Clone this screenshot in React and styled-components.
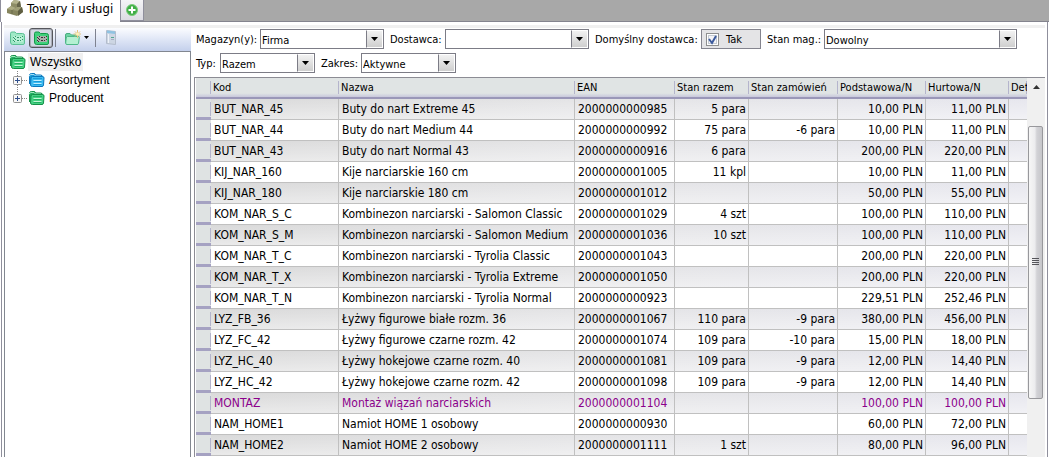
import React from "react";
import styled, { createGlobalStyle, css } from "styled-components";

const GlobalStyle = createGlobalStyle`
  *, *::before, *::after { box-sizing: border-box; }
  body { margin: 0; background: #fff; color: #000; font-family: "DejaVu Sans Condensed", "DejaVu Sans", sans-serif; font-size: 11px; }
  #root { height: 100vh; }
  button, select, input { font: inherit; color: inherit; margin: 0; }
`;

const Window = styled.div`
  display: flex;
  flex-direction: column;
  height: 100vh;
  overflow: hidden;
`;

const TabBar = styled.nav`
  display: flex;
  flex: none;
  height: 22px;
  background: #a8a8a8;
  border-bottom: 1px solid #84848e;
`;

const Tab = styled.button`
  display: flex;
  align-items: center;
  gap: 4px;
  width: 120px;
  height: 22px;
  padding: 0 0 6px 6px;
  border: 0;
  border-left: 1px solid #8f8f9c;
  background: #fff;
  font-size: 13px;
  white-space: nowrap;
`;

const AddTab = styled.button`
  display: flex;
  align-items: center;
  justify-content: center;
  width: 24px;
  height: 21px;
  padding: 0;
  border: 1px solid #8f8f9c;
  border-top: 0;
  background: linear-gradient(#f4f4f6, #dcdce2);
`;

const Body = styled.div`
  display: flex;
  flex: 1;
  min-height: 0;
  margin: 0 1px;
  padding: 3px 2px 0;
  border: 1px solid #8f8f9c;
  border-width: 0 1px;
`;

const Sidebar = styled.aside`
  display: flex;
  flex-direction: column;
  flex: none;
  width: 187px;
  border-top: 3px solid #f0f0f0;
`;

const Toolbar = styled.div`
  display: flex;
  align-items: center;
  height: 23px;
  padding: 0 0 4px 1px;
  background: linear-gradient(#fbfcff, #dfe6f6 50%, #c4d0ec);
`;

const ToolButton = styled.button`
  display: flex;
  align-items: center;
  justify-content: center;
  gap: 3px;
  flex: none;
  width: ${(p) => p.$width || 24}px;
  height: 20px;
  padding: 0;
  border: 1px solid transparent;
  border-radius: 3px;
  background: none;
  ${(p) =>
    p.$pressed &&
    css`
      border-color: #55565c;
      background: #d3d8e4;
      box-shadow: inset 0 0 0 1px #a9adb8;
    `}
`;

const Divider = styled.span`
  flex: none;
  width: 1px;
  height: 18px;
  margin: 0 3px 0 2px;
  background: #7e8290;
`;

const Tree = styled.ul`
  flex: 1;
  margin: 0;
  padding: 1px 0 0 4px;
  border: 1px solid #828790;
  border-bottom: 0;
  list-style: none;
  font-family: "Liberation Sans", sans-serif;
  font-size: 12px;
`;

const Branch = styled.ul`
  margin: 0;
  padding: 0;
  list-style: none;
`;

const TreeRow = styled.div`
  display: flex;
  align-items: center;
  height: 18px;
  gap: 2px;
`;

const TreeText = styled.span`
  padding: 0 2px;
  line-height: 18px;
  background: ${(p) => (p.$selected ? "#f0f0f0" : "none")};
`;

const Expander = styled.button`
  display: flex;
  padding: 0;
  border: 0;
  background: none;
  margin-right: -2px;
`;

const Content = styled.main`
  display: flex;
  flex-direction: column;
  flex: 1;
  min-width: 0;
  border-top: 3px solid #f0f0f0;
`;

const Filters = styled.form`
  display: flex;
  flex-wrap: wrap;
  gap: 4px 6px;
  padding: 1px 5px 4px;
`;

const Field = styled.div`
  display: flex;
  align-items: center;
  height: 20px;
`;

const FieldLabel = styled.label`
  width: ${(p) => p.$width}px;
  white-space: nowrap;
`;

const Combo = styled.div`
  display: grid;
  width: ${(p) => p.$width}px;
  height: 20px;
  border: 1px solid #7c7c86;
  background: #fff;
  & > * { grid-area: 1 / 1; }
`;

const ComboSelect = styled.select`
  appearance: none;
  width: 100%;
  height: 18px;
  padding: 2px 18px 0 1px;
  border: 0;
  border-radius: 0;
  background: none;
`;

const ComboArrow = styled.span`
  display: flex;
  align-items: center;
  justify-content: center;
  justify-self: end;
  width: 17px;
  height: 18px;
  border: 1px solid #fff;
  border-left-color: #7c7c86;
  background: linear-gradient(#f2f2f2, #cfcfcf);
  pointer-events: none;
`;

const CheckBox = styled.label`
  display: flex;
  align-items: center;
  gap: 7px;
  width: 60px;
  height: 20px;
  padding-left: 4px;
  border: 1px solid #84848e;
  background: #e4e4e6;
`;

const CheckInput = styled.span`
  display: grid;
  & > * { grid-area: 1 / 1; }
  & > input {
    appearance: none;
    width: 13px;
    height: 13px;
    border: 1px solid #8e8f8f;
    background: #f4f4f6;
    box-shadow: inset 0 0 0 1px #fff, inset 0 0 0 2px #c4cad2;
  }
  & > svg { pointer-events: none; }
`;

const GridPanel = styled.section`
  display: flex;
  flex: 1;
  min-height: 0;
  margin-left: 3px;
  border-top: 1px solid #8c8c94;
  border-left: 1px solid #8c8c94;
`;

const GridView = styled.div`
  flex: 1;
  min-width: 0;
  overflow: hidden;
  padding-left: 1px;
`;

const Table = styled.table`
  width: 100%;
  table-layout: fixed;
  border-collapse: separate;
  border-spacing: 0;
  font-size: 12px;
`;

const HeadCell = styled.th`
  height: 21px;
  padding: 0 0 0 2px;
  border-bottom: 2px solid #9a97b8;
  background:
    linear-gradient(#b4b4cc, #b4b4cc) right 3px / 1px 13px no-repeat,
    linear-gradient(#e0e4e4 80%, #c8c8dc);
  font-size: 11px;
  font-weight: normal;
  text-align: left;
  white-space: nowrap;
  overflow: hidden;
`;

const Row = styled.tr`
  color: ${(p) => (p.$accent ? "#8b008b" : "#000")};
  background: #fff;
  &:nth-child(odd) {
    background:
      linear-gradient(rgba(255, 255, 255, 0), rgba(255, 255, 255, 0.45)),
      linear-gradient(to right, #d9d9d9, #e4e4e6 45%, #e7e7ee);
  }
`;

const Cell = styled.td`
  height: 21px;
  padding: 0 2px 0 3px;
  border-right: 1px solid #c0c0c0;
  border-bottom: 1px solid #c0c0c0;
  line-height: 20px;
  text-align: ${(p) => (p.$numeric ? "right" : "left")};
  white-space: nowrap;
  overflow: hidden;
  &:last-child { border-right: 0; }
`;

const Selector = styled.td`
  padding: 0;
  border-bottom: 3px solid #a5a2c2;
  background:
    linear-gradient(#b4b4cc, #b4b4cc) right 3px / 1px 14px no-repeat,
    #dfe3e3;
`;

const ScrollBar = styled.div`
  display: flex;
  flex-direction: column;
  flex: none;
  width: 18px;
  padding-left: 1px;
  background: #f0f0f0;
`;

const ScrollUp = styled.button`
  display: flex;
  align-items: center;
  justify-content: center;
  width: 16px;
  height: 18px;
  margin-bottom: 30px;
  padding: 0;
  border: 0;
  background: none;
`;

const Thumb = styled.div`
  display: flex;
  align-items: center;
  justify-content: center;
  width: 15px;
  height: 72%;
  border: 1px solid #98989c;
  border-radius: 2px;
  background: linear-gradient(to right, #f6f6f6, #ececee 45%, #d2d2d6 60%, #c6c6ca);
`;

function FolderIcon({ blue }) {
  const dark = blue ? "#0a78bd" : "#149048";
  const mid = blue ? "#3cbcf2" : "#45d283";
  const deep = blue ? "#1a9ad8" : "#22b062";
  const light = blue ? "#c4f0ff" : "#c0f8d6";
  return (
    <svg width="17" height="16" viewBox="0 0 17 16" aria-hidden="true">
      <path d="M1.5 12V3.500q0-2 2-2h2.500q1 0 1.500 1l.5.5h4.500q2 0 2 2" fill={deep} stroke={dark} />
      <path d="M1 4.500q.5-2 2-2h3l1.500 1.500h5.500" fill="none" stroke={light} opacity=".8" />
      <path d="M4.500 4.500h10q1.500 0 1.500 1.500l-.5 7q-.2 1.500-1.500 1.500H4.500q-1.800 0-2-1.500L3 6q0-1.500 1.500-1.500z" fill={mid} stroke={dark} />
      <path d="M5 6.500h9" stroke={deep} />
      <path d="M5.500 8.500h8M5.500 11.500h8" stroke={light} />
      <path d="M5.500 9.500h8M5.500 12.500h8" stroke={deep} />
    </svg>
  );
}

function ListFolderIcon({ active }) {
  const ink = active ? "#333" : "#2f9468";
  return (
    <svg width="17" height="16" viewBox="0 0 17 16" aria-hidden="true">
      <path d="M1.500 12V3.500q0-1.500 1.500-1.500h3l1.500 1.500h6q2 0 2 2V13q0 1.500-1.500 1.500H3.500q-2 0-2-2.500z" fill={active ? "#3fd07c" : "#9fe8c6"} stroke={active ? "#149a4a" : "#5cc095"} />
      <path d="M4 6h10v6H4z" fill={active ? "#a9b0ac" : "#b8f0d6"} />
      <path d="M4 7.500h1M6 6.500h1M8 7.500h2M11 7.500h1M13 6.500h1M5 8.500h1M4 10.500h1M6 9.500h1M8 10.500h2M11 10.500h1M13 9.500h1M5 11.500h1" stroke={ink} />
    </svg>
  );
}

function NewFolderIcon() {
  return (
    <svg width="17" height="16" viewBox="0 0 17 16" aria-hidden="true">
      <path d="M1.500 13V5q0-1.500 1.500-1.500h3l1.500 1.500h5q1.500 0 1.500 1.500" fill="#6fd4a4" stroke="#48ad7f" />
      <path d="M3.500 6.500h11q1 0 .8 1l-.8 6q-.2 1-1.500 1H3q-1.500 0-1.300-1.500l.5-5q.1-1.500 1.300-1.500z" fill="#b4f0d2" stroke="#4db887" />
      <path d="M13.500 0v8M9.500 4h7.500M11 1.500l5 5M16 1.500l-5 5" stroke="#e6c67e" />
      <circle cx="13.500" cy="4" r="1.500" fill="#fff3b8" />
    </svg>
  );
}

function PageIcon() {
  return (
    <svg width="10" height="15" viewBox="0 0 10 15" aria-hidden="true">
      <path d="M.5.5l9 1v13l-9-1z" fill="#cdd6e3" stroke="#b3bccb" />
      <path d="M1 .5l8 1v2.500L1 3z" fill="#8fc3e2" />
      <path d="M2.500 4v9" stroke="#eef2f8" />
      <path d="M5 7.500h3" stroke="#54a892" />
      <path d="M5 9.500h3" stroke="#a4b0c4" />
    </svg>
  );
}

function BoxesIcon() {
  return (
    <svg width="16" height="16" viewBox="0 0 16 16" aria-hidden="true">
      <path d="M4 3l3-3 6 1 1 6-4 3-6-2z" fill="#8d8c66" />
      <path d="M4 3l3-3 6 1-3 3z" fill="#b3b28c" />
      <path d="M10 4l3-3 1 6-4 2z" fill="#66654a" />
      <path d="M0 9l4-3 5 2 6-1 1 5-6 4-10-3z" fill="#86855e" />
      <path d="M0 9l4-3 5 2-4 2z" fill="#adac84" />
      <path d="M6 10l4-3 5 0-4 4z" fill="#a09f78" />
      <path d="M11 11l4-4 1 5-5 4z" fill="#5f5e42" />
      <path d="M5 10v4" stroke="#6b6a4a" />
    </svg>
  );
}

function PlusIcon() {
  return (
    <svg width="12" height="12" viewBox="0 0 12 12" aria-hidden="true">
      <circle cx="6" cy="6" r="5.5" fill="#3fae45" stroke="#7ccb7c" />
      <path d="M6 2.500v7M2.500 6h7" stroke="#fff" strokeWidth="2" />
    </svg>
  );
}

function DownArrow({ small }) {
  return (
    <svg width={small ? 5 : 7} height={small ? 3 : 4} viewBox="0 0 7 4" aria-hidden="true">
      <path d="M0 0h7L3.500 4z" fill="#000" />
    </svg>
  );
}

function ExpanderIcon({ last }) {
  return (
    <svg width="19" height="18" viewBox="0 0 19 18" aria-hidden="true">
      <path d={last ? "M8.500 0v9" : "M8.500 0v18"} stroke="#888" strokeDasharray="1 1" />
      <path d="M13 9.500h6" stroke="#888" strokeDasharray="1 1" />
      <rect x="4.500" y="5.500" width="8" height="8" rx="1" fill="#f8f8f8" stroke="#919191" />
      <path d="M6 9.500h5M8.500 7v5" stroke="#30508c" />
    </svg>
  );
}

function Combobox({ id, label, labelWidth, width, options }) {
  return (
    <Field>
      <FieldLabel htmlFor={id} $width={labelWidth}>{label}</FieldLabel>
      <Combo $width={width}>
        <ComboSelect id={id}>
          {options.map((o) => <option key={o}>{o}</option>)}
        </ComboSelect>
        <ComboArrow><DownArrow /></ComboArrow>
      </Combo>
    </Field>
  );
}

const columns = [
  { title: "Kod", width: 128 },
  { title: "Nazwa", width: 236 },
  { title: "EAN", width: 100 },
  { title: "Stan razem", width: 74, numeric: true },
  { title: "Stan zamówień", width: 89, numeric: true },
  { title: "Podstawowa/N", width: 88, numeric: true },
  { title: "Hurtowa/N", width: 83, numeric: true },
  { title: "Det" },
];

const products = [
  ["BUT_NAR_45", "Buty do nart Extreme 45", "2000000000985", "5 para", "", "10,00 PLN", "11,00 PLN"],
  ["BUT_NAR_44", "Buty do nart Medium 44", "2000000000992", "75 para", "-6 para", "10,00 PLN", "11,00 PLN"],
  ["BUT_NAR_43", "Buty do nart Normal 43", "2000000000916", "6 para", "", "200,00 PLN", "220,00 PLN"],
  ["KIJ_NAR_160", "Kije narciarskie 160 cm", "2000000001005", "11 kpl", "", "10,00 PLN", "11,00 PLN"],
  ["KIJ_NAR_180", "Kije narciarskie 180 cm", "2000000001012", "", "", "50,00 PLN", "55,00 PLN"],
  ["KOM_NAR_S_C", "Kombinezon narciarski - Salomon Classic", "2000000001029", "4 szt", "", "100,00 PLN", "110,00 PLN"],
  ["KOM_NAR_S_M", "Kombinezon narciarski - Salomon Medium", "2000000001036", "10 szt", "", "100,00 PLN", "110,00 PLN"],
  ["KOM_NAR_T_C", "Kombinezon narciarski - Tyrolia Classic", "2000000001043", "", "", "200,00 PLN", "220,00 PLN"],
  ["KOM_NAR_T_X", "Kombinezon narciarski - Tyrolia Extreme", "2000000001050", "", "", "200,00 PLN", "220,00 PLN"],
  ["KOM_NAR_T_N", "Kombinezon narciarski - Tyrolia Normal", "2000000000923", "", "", "229,51 PLN", "252,46 PLN"],
  ["LYZ_FB_36", "Łyżwy figurowe białe rozm. 36", "2000000001067", "110 para", "-9 para", "380,00 PLN", "456,00 PLN"],
  ["LYZ_FC_42", "Łyżwy figurowe czarne rozm. 42", "2000000001074", "109 para", "-10 para", "15,00 PLN", "18,00 PLN"],
  ["LYZ_HC_40", "Łyżwy hokejowe czarne rozm. 40", "2000000001081", "109 para", "-9 para", "12,00 PLN", "14,40 PLN"],
  ["LYZ_HC_42", "Łyżwy hokejowe czarne rozm. 42", "2000000001098", "109 para", "-9 para", "12,00 PLN", "14,40 PLN"],
  ["MONTAZ", "Montaż wiązań narciarskich", "2000000001104", "", "", "100,00 PLN", "100,00 PLN"],
  ["NAM_HOME1", "Namiot HOME 1 osobowy", "2000000000930", "", "", "60,00 PLN", "72,00 PLN"],
  ["NAM_HOME2", "Namiot HOME 2 osobowy", "2000000001111", "1 szt", "", "80,00 PLN", "96,00 PLN"],
];

export default function App() {
  return (
    <Window>
      <GlobalStyle />
      <TabBar>
        <Tab><BoxesIcon />Towary i usługi</Tab>
        <AddTab aria-label="Nowa karta"><PlusIcon /></AddTab>
      </TabBar>
      <Body>
        <Sidebar>
          <Toolbar>
            <ToolButton aria-label="Lista"><ListFolderIcon /></ToolButton>
            <ToolButton aria-label="Drzewo" $pressed><ListFolderIcon active /></ToolButton>
            <Divider />
            <ToolButton aria-label="Nowy folder" $width={34}><NewFolderIcon /><DownArrow small /></ToolButton>
            <Divider />
            <ToolButton aria-label="Karta"><PageIcon /></ToolButton>
          </Toolbar>
          <Tree>
            <li>
              <TreeRow><FolderIcon /><TreeText $selected>Wszystko</TreeText></TreeRow>
              <Branch>
                <li>
                  <TreeRow>
                    <Expander aria-label="Rozwiń Asortyment"><ExpanderIcon /></Expander>
                    <FolderIcon blue /><TreeText>Asortyment</TreeText>
                  </TreeRow>
                </li>
                <li>
                  <TreeRow>
                    <Expander aria-label="Rozwiń Producent"><ExpanderIcon last /></Expander>
                    <FolderIcon /><TreeText>Producent</TreeText>
                  </TreeRow>
                </li>
              </Branch>
            </li>
          </Tree>
        </Sidebar>
        <Content>
          <Filters>
            <Combobox id="magazyn" label="Magazyn(y):" labelWidth={64} width={124} options={["Firma"]} />
            <Combobox id="dostawca" label="Dostawca:" labelWidth={55} width={144} options={[""]} />
            <Field>
              <FieldLabel htmlFor="domyslny" $width={106}>Domyślny dostawca:</FieldLabel>
              <CheckBox>
                <CheckInput>
                  <input id="domyslny" type="checkbox" defaultChecked />
                  <svg width="13" height="13" viewBox="0 0 13 13" aria-hidden="true">
                    <path d="M3 6l3 4 4-7" fill="none" stroke="#3c5a9c" strokeWidth="2" />
                  </svg>
                </CheckInput>
                Tak
              </CheckBox>
            </Field>
            <Combobox id="stan" label="Stan mag.:" labelWidth={57} width={193} options={["Dowolny"]} />
            <Combobox id="typ" label="Typ:" labelWidth={24} width={95} options={["Razem"]} />
            <Combobox id="zakres" label="Zakres:" labelWidth={40} width={95} options={["Aktywne"]} />
          </Filters>
          <GridPanel>
            <GridView>
              <Table>
                <colgroup>
                  <col style={{ width: 15 }} />
                  {columns.map((c) => <col key={c.title} style={{ width: c.width }} />)}
                </colgroup>
                <thead>
                  <tr>
                    <HeadCell aria-label="Wiersz" />
                    {columns.map((c) => <HeadCell key={c.title}>{c.title}</HeadCell>)}
                  </tr>
                </thead>
                <tbody>
                  {products.map((p) => (
                    <Row key={p[0]} $accent={p[0] === "MONTAZ"}>
                      <Selector />
                      {columns.map((c, i) => <Cell key={c.title} $numeric={c.numeric}>{p[i]}</Cell>)}
                    </Row>
                  ))}
                </tbody>
              </Table>
            </GridView>
            <ScrollBar>
              <ScrollUp aria-label="Przewiń w górę">
                <svg width="7" height="4" viewBox="0 0 7 4" aria-hidden="true"><path d="M0 4h7L3.500 0z" fill="#333" /></svg>
              </ScrollUp>
              <Thumb>
                <svg width="7" height="8" viewBox="0 0 7 8" aria-hidden="true">
                  <path d="M0 .5h7M0 2.500h7M0 4.500h7M0 6.500h7" stroke="#55555a" />
                </svg>
              </Thumb>
            </ScrollBar>
          </GridPanel>
        </Content>
      </Body>
    </Window>
  );
}
